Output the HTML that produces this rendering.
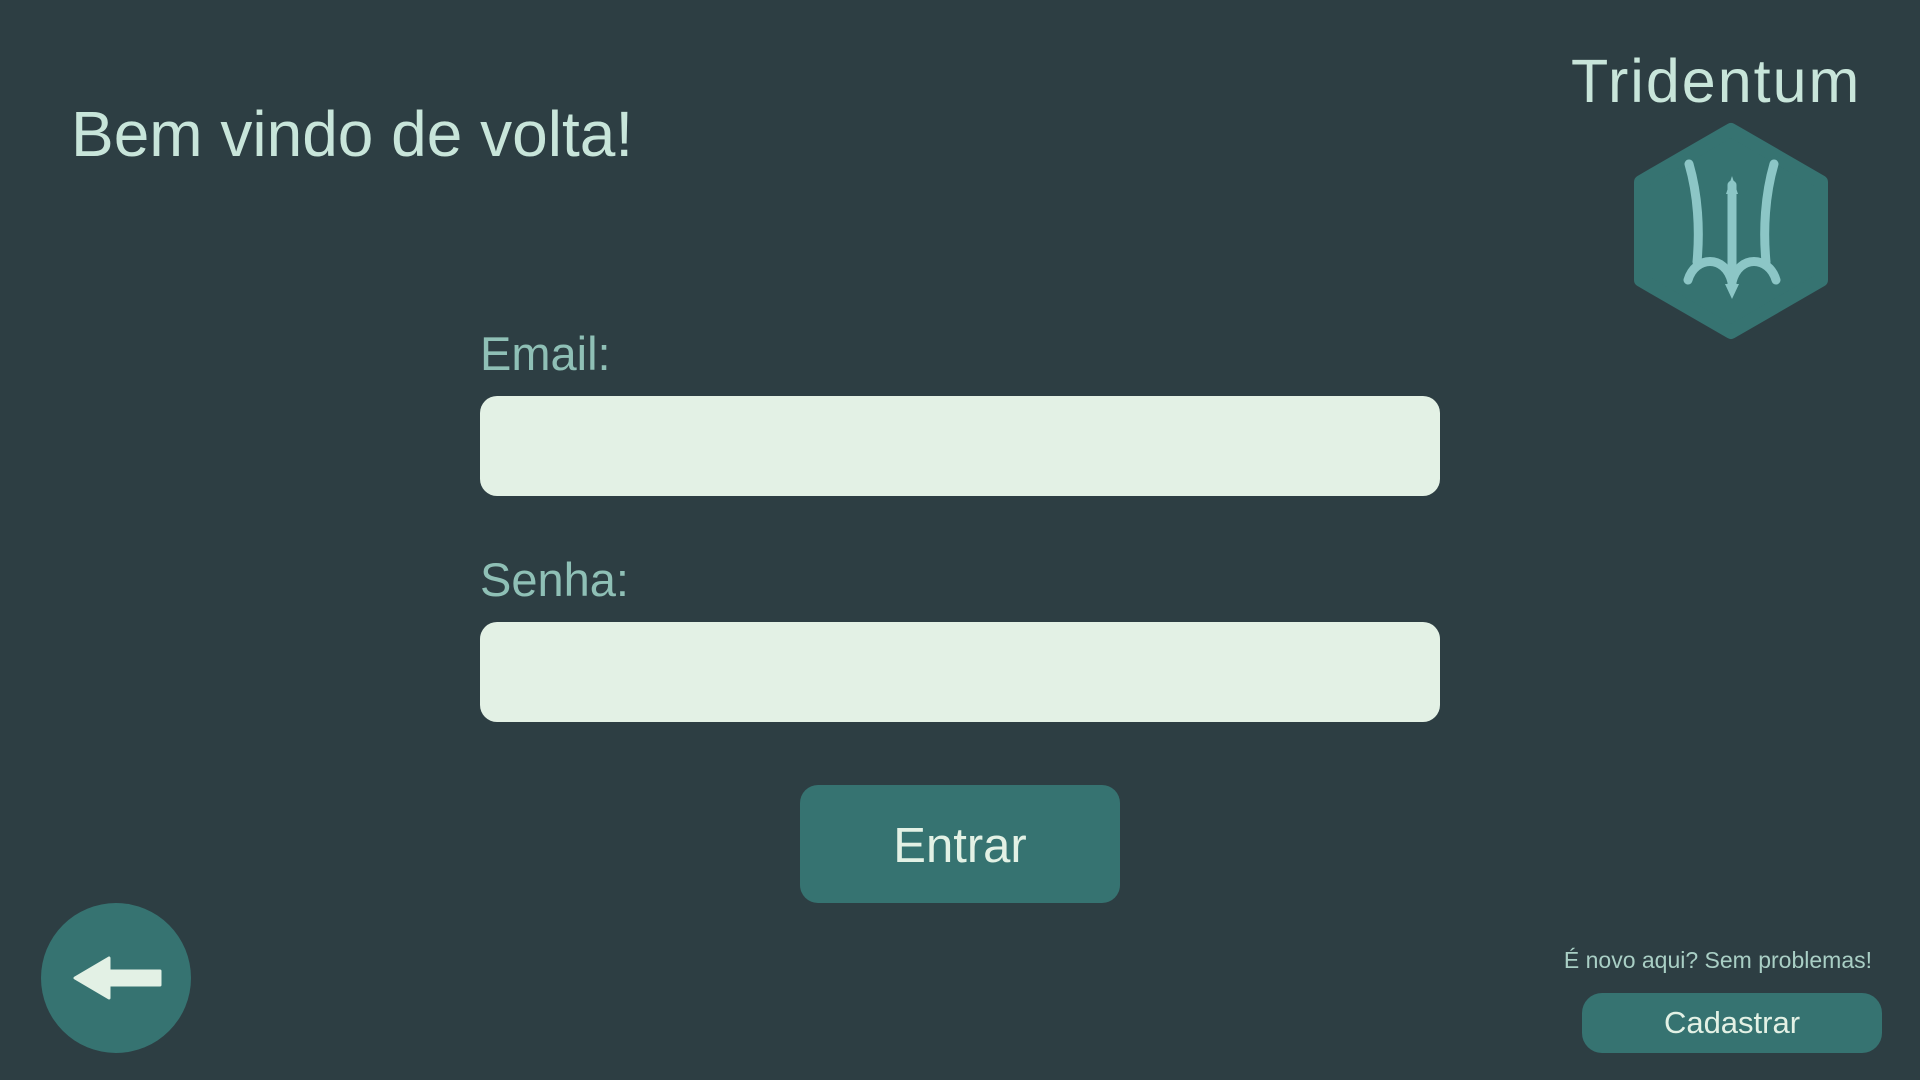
<!DOCTYPE html>
<html><head><meta charset="utf-8"><style>
body{margin:0;width:1920px;height:1080px;background:#2d3e43;position:relative;overflow:hidden;font-family:"Liberation Sans",sans-serif}
.a{position:absolute;white-space:nowrap}
.in{position:absolute;left:480px;width:960px;height:100px;background:#e3f1e5;border-radius:17px}
</style></head><body>
<div class="a" style="left:71px;top:94px;font-size:64px;color:#c8e5da;line-height:80px">Bem vindo de volta!</div>
<div class="a" style="left:1571px;top:46px;font-size:61px;letter-spacing:2px;color:#c8e5da;line-height:70px">Tridentum</div>
<div class="a" style="left:480px;top:326px;font-size:47px;color:#8fc0b6;line-height:56px">Email:</div>
<div class="in" style="top:396px"></div>
<div class="a" style="left:480px;top:552px;font-size:47px;color:#8fc0b6;line-height:56px">Senha:</div>
<div class="in" style="top:622px"></div>
<div class="a" style="left:800px;top:785px;width:320px;height:118px;background:#367371;border-radius:18px;color:#e3f1e5;font-size:49px;text-align:center;line-height:122px">Entrar</div>
<div class="a" style="left:1560px;top:944px;width:312px;text-align:right;font-size:23px;color:#a9cfc5;line-height:32px">É novo aqui? Sem problemas!</div>
<div class="a" style="left:1582px;top:993px;width:300px;height:60px;background:#367371;border-radius:20px;color:#e3f1e5;font-size:31px;text-align:center;line-height:60px">Cadastrar</div>
<svg class="a" style="left:0;top:0" width="1920" height="1080">
<circle cx="116" cy="978" r="75" fill="#367371"/>
<path d="M75,978 L109,958 L109,971 L160,971 L160,985 L109,985 L109,998 Z" fill="#e3f1e5" stroke="#e3f1e5" stroke-width="3" stroke-linejoin="round"/>
<path d="M1731,130 L1821,182 L1821,280 L1731,332 L1641,280 L1641,182 Z" fill="#367371" stroke="#367371" stroke-width="14" stroke-linejoin="round"/>
<g fill="none" stroke="#8cc6c6" stroke-width="9" stroke-linecap="round">
<path d="M1689,164 C1698,195 1700,230 1697,262"/>
<path d="M1774,164 C1765,195 1763,230 1766,262"/>
<path d="M1732,185 L1732,288"/>
<path d="M1688,280 C1695,256 1725,254 1732,282 C1739,254 1769,256 1776,280"/>
</g>
<polygon points="1732,176 1738,194 1726,194" fill="#8cc6c6"/>
<polygon points="1725,284 1739,284 1732,299" fill="#8cc6c6"/>
</svg>
</body></html>
